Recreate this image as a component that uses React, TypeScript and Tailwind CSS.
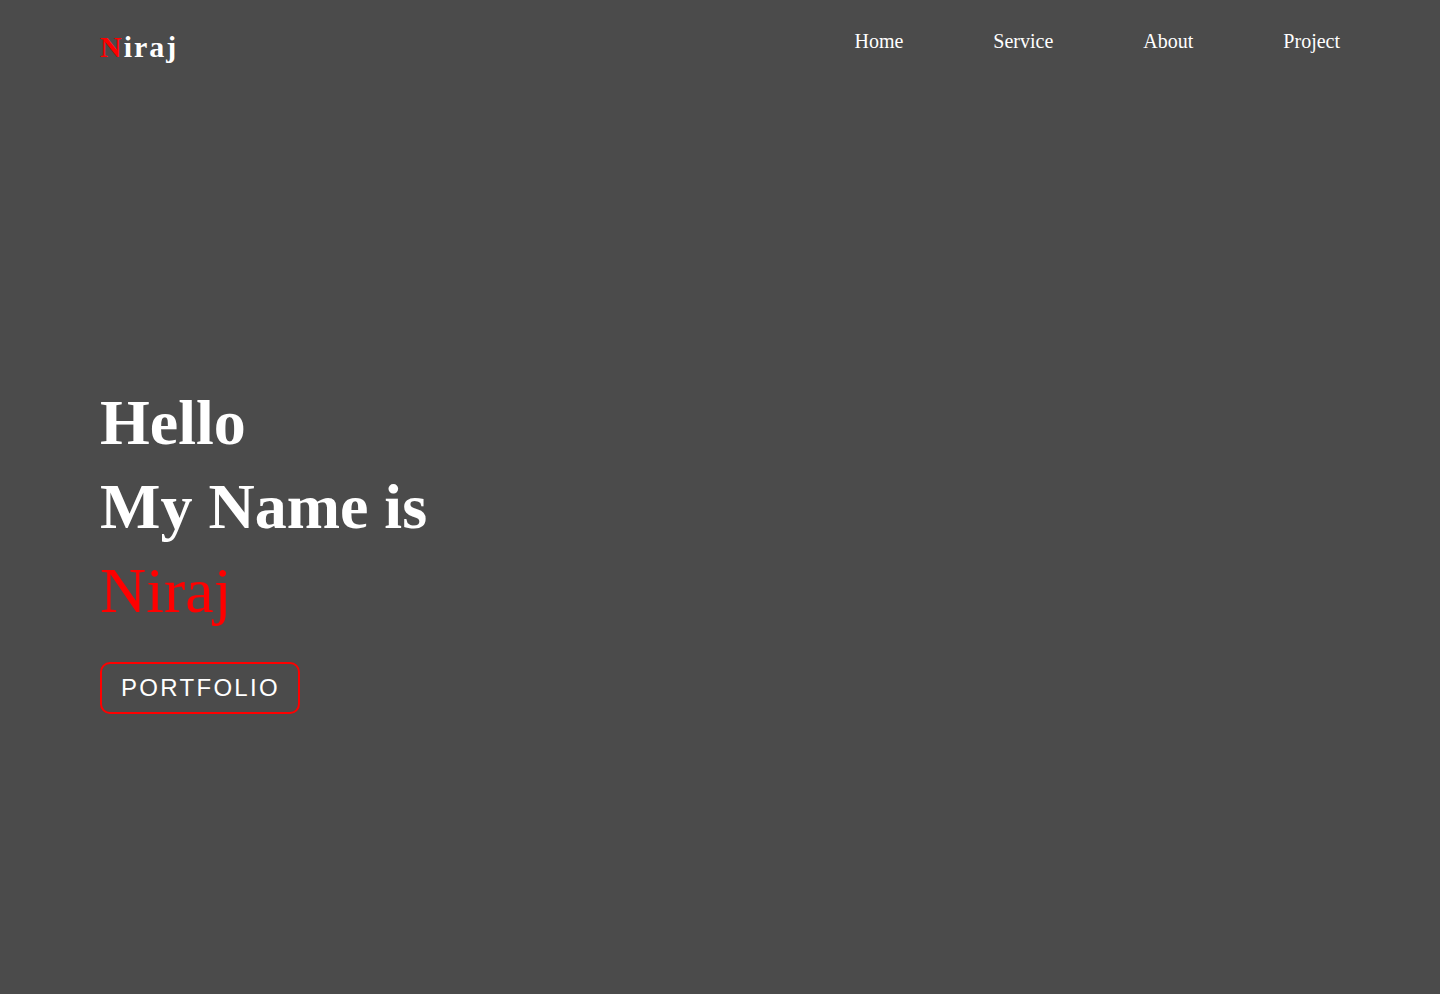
export default function App() {
  const links = ['Home', 'Service', 'About', 'Project'];

  return (
    <div className="h-[994px] w-full overflow-hidden bg-[#4b4b4b] font-['Liberation_Serif',serif] text-white">
      {/* Header */}
      <header className="flex items-start justify-between px-[100px]">
        <div className="mt-[30px] text-[30px] font-bold leading-[34px] tracking-[2px]">
          <span className="text-[#ff0000]">N</span>iraj
        </div>
        <nav className="mt-[30px] flex gap-[90px] text-[20px] leading-[23px]">
          {links.map((l) => (
            <a key={l} href="#" className="text-white">
              {l}
            </a>
          ))}
        </nav>
      </header>

      {/* Hero */}
      <section className="px-[100px] pt-[317px]">
        <h1 className="text-[64px] font-bold leading-[84px]">Hello</h1>
        <h1 className="text-[64px] font-bold leading-[84px]">My Name is</h1>
        <h1 className="text-[64px] font-normal leading-[84px] text-[#ff0000]">Niraj</h1>
        <button className="mt-[29px] h-[52px] w-[200px] rounded-[10px] border-2 border-[#ff0000] pl-[19px] text-left font-['Liberation_Sans',sans-serif] text-[24px] tracking-[2.3px] text-white">
          PORTFOLIO
        </button>
      </section>
    </div>
  );
}
